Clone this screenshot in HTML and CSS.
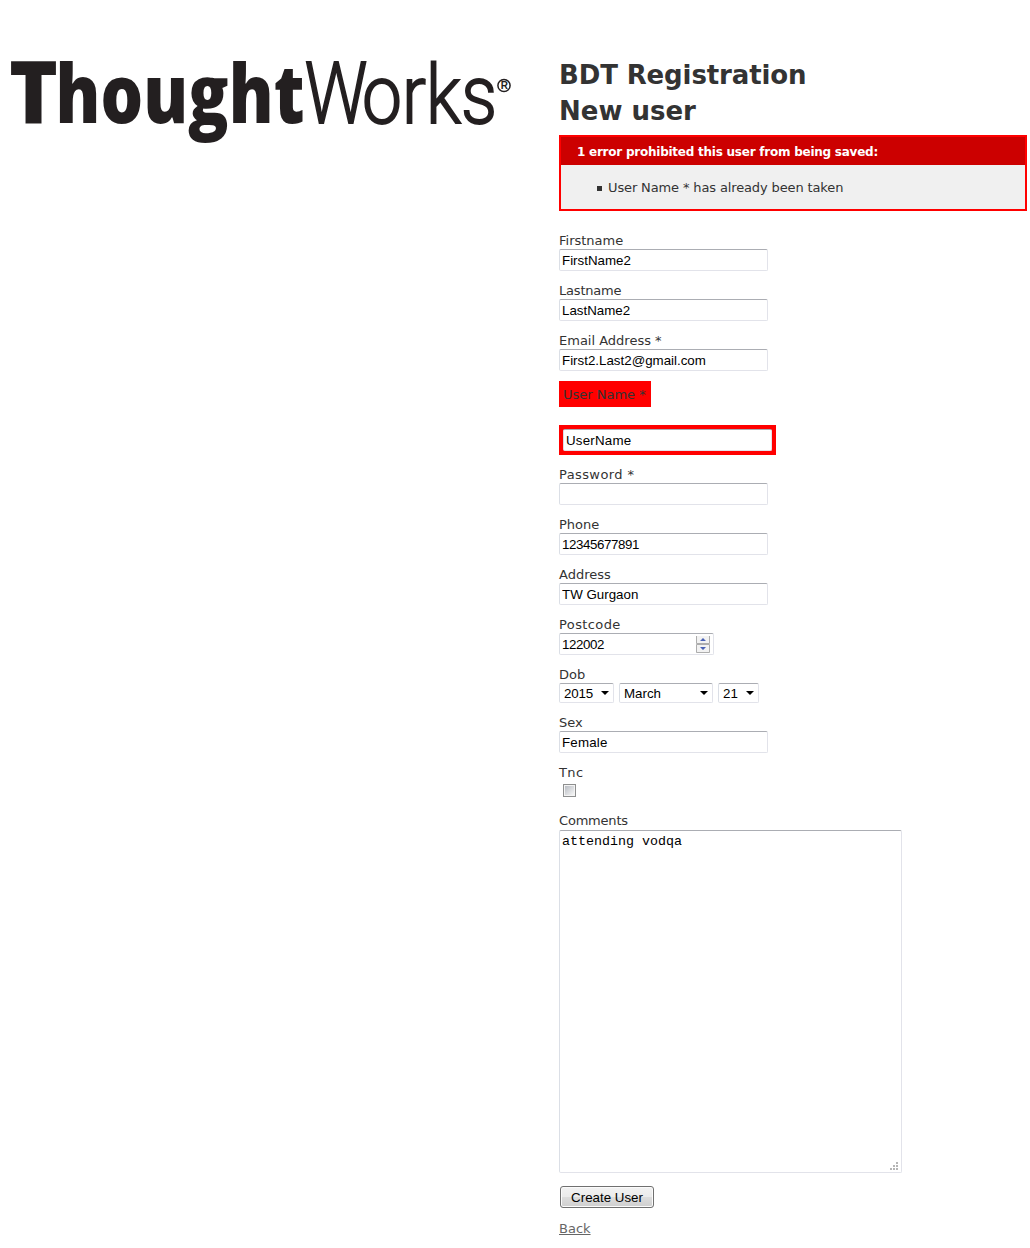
FILE: index.html
```html
<!DOCTYPE html>
<html lang="en">
<head>
<meta charset="utf-8">
<title>BDT Registration</title>
<link rel="stylesheet" href="styles.css">
</head>
<body>
<div class="page">
  <header class="brand">
    <svg class="logo" width="510" height="100" viewBox="0 0 510 100" role="img" aria-label="ThoughtWorks">
      <text class="logo-bold cap" x="9" y="73" textLength="49" lengthAdjust="spacingAndGlyphs">T</text>
      <text class="logo-bold" x="55.5" y="73" textLength="249" lengthAdjust="spacingAndGlyphs">hought</text>
      <text class="logo-light cap" x="304.5" y="73" textLength="63" lengthAdjust="spacingAndGlyphs">W</text>
      <text class="logo-light" x="362" y="73" textLength="135" lengthAdjust="spacingAndGlyphs">orks</text>
      <circle class="mark-ring" cx="504" cy="35.5" r="6.1"/>
      <text class="mark-letter" x="500.8" y="39.3">R</text>
    </svg>
  </header>
  <main class="content">
    <h1 class="title t-main">BDT Registration</h1>
    <h1 class="title t-sub">New user</h1>
    <form class="form">
      <section class="errors">
        <h2 class="errors-title"><span>1 error prohibited this user from being saved:</span></h2>
        <div class="errors-item"><i class="bullet"></i><span class="errors-text">User Name * has already been taken</span></div>
      </section>
      <div class="field"><label>Firstname</label><input class="text" value="FirstName2"></div>
      <div class="field"><label class="snug">Lastname</label><input class="text" value="LastName2"></div>
      <div class="field"><label>Email Address *</label><input class="text" value="First2.Last2@gmail.com"></div>
      <div class="field invalid">
        <label>User Name *</label>
        <div class="invalid-box"><input class="text loose" value="UserName"></div>
      </div>
      <div class="field"><label class="wide">Password *</label><input class="text" type="password"></div>
      <div class="field"><label>Phone</label><input class="text digits" value="12345677891"></div>
      <div class="field"><label>Address</label><input class="text" value="TW Gurgaon"></div>
      <div class="field"><label class="wide">Postcode</label>
        <div class="number"><span class="digits">122002</span>
          <svg class="spinner" width="14" height="17" viewBox="0 0 14 17">
            <path fill="#f2f2f2" d="M0 0h14v17H0z"/>
            <path fill="none" stroke="#adadad" d="M.5 0v7.5h13V0M.5 8.5h13v8H.5z"/>
            <path fill="#4a62b5" d="M4 5h6L7 2zM4 11h6l-3 3z"/>
          </svg>
        </div>
      </div>
      <div class="field"><label>Dob</label>
        <div class="selects">
          <div class="select year"><span>2015</span><svg width="8" height="4"><path d="M0 0h8L4 4z"/></svg></div>
          <div class="select month"><span>March</span><svg width="8" height="4"><path d="M0 0h8L4 4z"/></svg></div>
          <div class="select day"><span>21</span><svg width="8" height="4"><path d="M0 0h8L4 4z"/></svg></div>
        </div>
      </div>
      <div class="field"><label>Sex</label><input class="text loose" value="Female"></div>
      <div class="field tnc"><label class="wide">Tnc</label><input class="check" type="checkbox"></div>
      <div class="field comments"><label class="snug">Comments</label>
        <div class="area"><span>attending vodqa</span>
          <svg class="grip" width="8" height="8" fill="#b5b5b5"><path d="M6 0h2v2H6zM3 3h2v2H3zM6 3h2v2H6zM0 6h2v2H0zM3 6h2v2H3zM6 6h2v2H6z"/></svg>
        </div>
      </div>
      <button class="submit" type="button">Create User</button>
    </form>
    <a class="back" href="#">Back</a>
  </main>
</div>
</body>
</html>
```
FILE: styles.css
```css
* { box-sizing: border-box; }
body {
  margin: 0;
  background: #fff;
  color: #333;
  font: 13px/18px Verdana, "DejaVu Sans", sans-serif;
}
.page { display: grid; grid-template-columns: 559px 468px; height: 1248px; }
.brand { padding-top: 50px; }
.logo { display: block; width: 510px; overflow: visible; }
.logo-bold { font: 800 82px "Open Sans", sans-serif; fill: #231f20; }
.logo-bold.cap { font-size: 87px; }
.logo-light { font: 300 82px Roboto, sans-serif; fill: #231f20; stroke: #231f20; stroke-width: 1.8; }
.logo-light.cap { font-size: 86px; }
.mark-ring { fill: none; stroke: #231f20; stroke-width: 1.5; }
.mark-letter { font: 700 10px "Liberation Sans", sans-serif; fill: #231f20; }

.content { padding-top: 57px; }
.title { margin: 0; font-size: 26px; line-height: 36px; font-weight: 700; white-space: nowrap; }
.t-main { letter-spacing: -.12px; }

.errors { margin: 6px 0 20px; height: 76px; border: 2px solid #f00; background: #f0f0f0; }
.errors-title {
  margin: 0; height: 28px; padding-left: 16px;
  background: #c00; color: #fff;
  font-size: 12px; line-height: 30px; font-weight: 700; letter-spacing: -.24px;
}
.errors-item { display: flex; align-items: center; height: 44px; padding-left: 36px; gap: 6px; }
.errors-text { padding-top: 2px; letter-spacing: -.13px; }
.bullet { width: 5px; height: 5px; margin-top: 2px; background: #333; }

.field { margin-bottom: 10px; }
.field label { display: block; width: max-content; height: 18px; line-height: 20px; }
.field .wide { letter-spacing: .4px; }
.field .snug { letter-spacing: -.2px; }
.text, .number, .select, .area {
  border: 1px solid #e2e3ea;
  border-top-color: #abadb3;
  border-left-color: #dbdfe6;
  border-radius: 2px;
  background: #fff;
  color: #000;
  font: 13.33px "Liberation Sans", Arial, sans-serif;
}
.text { display: block; width: 209px; height: 22px; padding: 1px 2px; outline: 0; }
.digits { letter-spacing: -.42px; }
.loose { letter-spacing: .2px; }
.invalid label { width: 92px; height: 26px; padding: 4px; margin-bottom: 18px; background: #f00; }
.invalid-box { width: 217px; padding: 4px; background: #f00; }
.number { display: flex; justify-content: space-between; align-items: center; width: 155px; height: 22px; padding: 0 3px 0 2px; }
.spinner { display: block; }
.selects { display: flex; gap: 5px; }
.select { display: flex; justify-content: space-between; align-items: center; height: 20px; padding: 0 4px; }
.year { width: 55px; letter-spacing: -.2px; }
.month { width: 94px; }
.day { width: 41px; }
.tnc { height: 38px; }
.check {
  display: block; appearance: none; width: 13px; height: 13px; margin: 3px 4px;
  border: 1px solid #8e8f8f;
  background: linear-gradient(135deg, #b9bdc4, #f6f6f6) content-box, #f4f4f4;
  padding: 1px;
}
.comments label { margin-bottom: 1px; }
.area {
  display: flex; flex-direction: column; justify-content: space-between;
  width: 343px; height: 343px; padding: 3px 3px 2px 2px;
  font: 13.33px/15px "Liberation Mono", "Courier New", monospace;
}
.grip { align-self: flex-end; }
.submit {
  display: block; width: 94px; height: 22px; margin: 13px 0 12px 1px; padding: 0;
  border: 1px solid #707070; border-radius: 3px;
  background: linear-gradient(#f2f2f2, #ebebeb 50%, #ddd 50%, #cfcfcf);
  box-shadow: inset 0 0 0 1px #fbfbfb;
  color: #000; font: 13.33px "Liberation Sans", Arial, sans-serif;
}
.back { color: #666; }
```
